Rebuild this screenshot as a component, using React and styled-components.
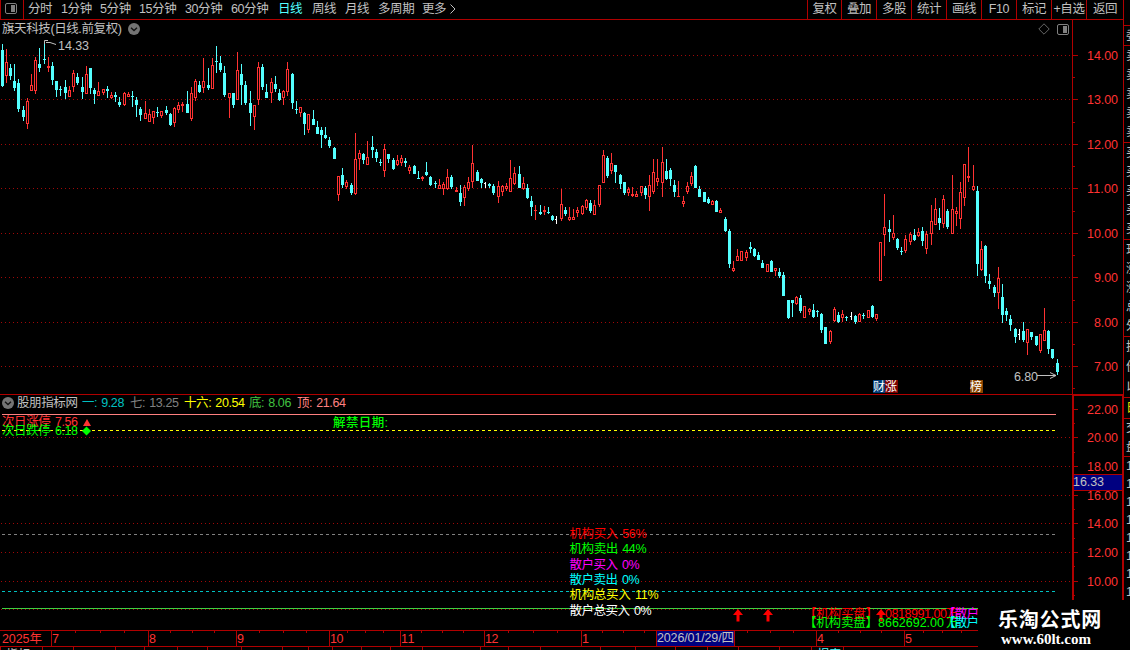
import React from "react";
import styled, { createGlobalStyle, ThemeProvider } from "styled-components";

const theme = {
  colors: {
    line: "#b00000",
    grid: "#a00808",
    red: "#ff3232",
    up: "#ff3232",
    down: "#54ffff",
    flat: "#ffffff",
    text: "#c0c0c0",
    muted: "#808080",
    navy: "#000080",
  },
  font: '"Liberation Sans", "Noto Sans CJK SC", sans-serif',
};
const c = theme.colors;

const GlobalStyle = createGlobalStyle`
  body {
    margin: 0;
    background: #000;
    overflow: hidden;
  }
`;

const Page = styled.div`
  position: relative;
  display: flex;
  width: 1130px;
  height: 650px;
  overflow: hidden;
  background: #000;
  color: ${p => p.theme.colors.text};
  font: 12.5px/16px ${p => p.theme.font};
  letter-spacing: -0.4px;
  white-space: nowrap;
`;

const Main = styled.div`
  display: flex;
  flex-direction: column;
  width: 1123px;
  flex-shrink: 0;
`;

//top toolbar
const Toolbar = styled.div`
  display: flex;
  box-sizing: border-box;
  height: 20px;
  border-bottom: 1px solid ${p => p.theme.colors.line};
`;

const LayoutButton = styled.div`
  box-sizing: border-box;
  width: 24px;
  height: 19px;
  padding: 2px 0 0 3px;
  border: solid ${p => p.theme.colors.line};
  border-width: 0 1px;
`;

const Periods = styled.div`
  display: flex;
  flex: 1;
  padding-left: 4px;
`;

const Period = styled.span`
  width: ${p => p.$w}px;
  line-height: 18px;
  color: ${p => (p.$active ? p.theme.colors.down : p.theme.colors.text)};
`;

const Tool = styled.span`
  box-sizing: border-box;
  width: ${p => p.$w || 35}px;
  line-height: 18px;
  text-align: center;
  border-left: 1px solid ${p => p.theme.colors.line};
`;

//panels
const Panel = styled.div`
  display: flex;
  height: ${p => p.$h}px;
`;

const Plot = styled.div`
  display: flex;
  flex-direction: column;
  width: 1072px;
  flex-shrink: 0;
`;

const TitleRow = styled.div`
  display: flex;
  align-items: center;
  height: 18px;
  padding: 0 3px 0 2px;
`;

const Title = styled.span`
  width: 126px;
`;

const TitleTools = styled.div`
  display: flex;
  align-items: center;
  gap: 6px;
  margin-left: auto;
`;

const Legend = styled.div`
  display: flex;
  align-items: center;
  box-sizing: border-box;
  height: 18px;
  padding: 0 0 2px 2px;
  border-top: 1px solid ${p => p.theme.colors.line};
  word-spacing: 1px;
`;

const LegendName = styled.span`
  width: 65px;
  padding-left: 3px;
`;

const LegendItem = styled.span`
  width: ${p => p.$w}px;
  color: ${p => p.$color};
`;

const Drawing = styled.svg`
  display: block;
  flex-shrink: 0;
  overflow: hidden;
  letter-spacing: 0;
  word-spacing: 1.5px;
`;

//bottom tabs
const Tabs = styled.div`
  display: flex;
  box-sizing: border-box;
  width: 978px;
  height: 4px;
  border-top: 1px solid ${p => p.theme.colors.line};
  overflow: hidden;
`;

const Tab = styled.span`
  box-sizing: border-box;
  width: ${p => p.$w}px;
  flex-shrink: 0;
  padding-left: 5px;
  border-left: 1px solid ${p => p.theme.colors.line};
  color: ${p => p.$color || p.theme.colors.text};
`;

//quote strip at the right edge
const Strip = styled.div`
  display: flex;
  flex-direction: column;
  box-sizing: border-box;
  width: 7px;
  border-left: 1px solid ${p => p.theme.colors.line};
  padding-top: 25px;
  overflow: hidden;
`;

const StripGroup = styled.div`
  display: flex;
  flex-direction: column;
  justify-content: space-around;
  box-sizing: border-box;
  height: ${p => p.$h}px;
  padding-left: 2px;
  border-top: 1px solid ${p => p.theme.colors.line};
  color: ${p => p.$color || p.theme.colors.text};
  line-height: 18px;
  overflow: hidden;
`;

const Watermark = styled.div`
  position: absolute;
  left: 978px;
  top: 600px;
  box-sizing: border-box;
  width: 152px;
  height: 50px;
  padding: 6px 0 0 20px;
  background: #000;
  color: #fff;
`;

const WatermarkName = styled.div`
  font: bold 20px/26px "Noto Sans CJK SC", sans-serif;
  letter-spacing: 0.8px;
`;

const WatermarkUrl = styled.div`
  margin: -1px 0 0 3px;
  font: bold 15px/16px "Liberation Serif", serif;
  letter-spacing: 0;
`;

const PanelIcon = () => (
  <svg width="13" height="12" viewBox="0 0 13 12" fill="none">
    <rect x="1.5" y="1.5" width="11" height="10" rx="1.5" stroke={c.muted} />
    <rect x="7" y="3" width="4" height="7" fill={c.muted} />
  </svg>
);

const ChevronIcon = () => (
  <svg width="12" height="12" viewBox="0 0 12 12" fill="none">
    <circle cx="6" cy="6" r="6" fill="#747474" />
    <path d="M3 4.8 6 7.6 9 4.8" stroke="#111" strokeWidth="1.3" />
  </svg>
);

const DiamondIcon = () => (
  <svg width="12" height="12" viewBox="0 0 12 12" fill="none">
    <path d="M6 .8 11.2 6 6 11.2.8 6Z" stroke={c.muted} strokeWidth=".8" />
  </svg>
);

// cy is the middle of the glyphs, w the full run length
const Label = ({ x, cy, w, color = c.red, size = 12.5, weight, children }) => (
  <text
    x={x}
    y={cy + 5}
    textLength={w}
    fontSize={size}
    fontWeight={weight}
    fill={color}
  >
    {children}
  </text>
);

const GridLine = ({ y }) => (
  <path
    d={`M1 ${y + 0.5}H1072`}
    stroke={c.grid}
    strokeDasharray="1 3"
    shapeRendering="crispEdges"
  />
);

// [kind, high, top, bottom, low] - u: up, d: down, w: unchanged
const candles = `
d44,50,86,87 u49,62,76,83 d64,68,76,80 d64,81,88,91 d79,83,109,112 d106,110,117,121 u98,101,124,129
u74,85,91,91 u57,60,91,94 d48,64,68,72 d43,59,60,64 u57,66,68,72 d62,66,80,85 d81,81,90,97
d86,89,90,96 d80,87,93,99 u86,90,97,97 u70,73,87,92 d73,77,83,85 d77,87,92,99 u66,74,94,94
d68,68,88,94 d88,90,94,104 u82,91,96,96 u89,89,93,95 d86,89,91,98 u92,95,98,99 d92,95,97,102
d97,102,105,107 u92,93,105,106 u92,94,97,97 d91,96,97,107 d97,100,105,117 d107,109,115,121
u101,113,119,119 u109,114,122,122 u111,111,118,124 d107,112,113,117 u111,111,116,118
d106,110,113,115 d113,114,125,126 u107,108,123,127 u102,105,110,113 u102,104,106,112
d91,104,113,113 u87,93,119,121 u79,81,98,101 d81,85,92,93 u58,81,88,93 d68,85,88,90 u58,65,89,89
d46,61,62,73 d56,63,70,72 d66,73,95,97 u93,93,98,118 d93,93,105,108 u52,70,100,100 d64,74,85,105
d81,85,103,105 d91,103,113,126 u105,105,117,130 u62,67,100,105 d64,67,87,90 d84,92,98,98
u78,82,93,103 d76,84,89,92 d89,93,100,101 u90,91,98,105 u62,69,92,96 d73,74,103,109
d101,109,110,114 u107,107,113,117 d112,113,124,135 u114,114,130,133 d110,119,125,125
d121,127,134,134 d127,130,135,148 d127,135,138,139 d137,140,146,148 d147,148,159,159
u176,176,195,201 d168,175,185,188 u180,182,187,189 d183,185,193,195 u133,159,194,195
u150,153,159,170 d153,154,160,164 u141,157,165,165 d136,147,150,158 d149,152,158,162
d159,162,163,166 u144,149,171,177 d154,154,159,163 d158,160,169,170 u155,160,165,166
u155,158,163,166 d158,161,163,167 u165,167,171,174 d165,166,174,174 d171,178,179,179
u176,177,179,181 d162,172,175,176 d176,177,185,186 d181,183,184,188 u179,185,189,189
u182,184,189,195 u169,177,189,190 d175,177,187,189 u187,190,192,192 d185,193,202,206
u185,187,198,206 u177,182,189,191 u145,163,182,188 d170,172,181,181 d178,179,183,188
w182,183,184,188 d183,184,186,188 d184,186,193,195 u181,186,197,203 u185,186,192,196
u183,186,189,191 u160,178,192,192 u167,173,184,185 d166,174,188,188 u177,183,189,190
d184,188,198,199 d196,201,207,216 u205,210,211,220 d205,212,214,215 u206,210,212,215
d207,212,213,214 d215,216,220,221 w216,219,220,224 u189,204,219,221 d207,210,214,216
u207,217,220,221 u209,217,220,220 u207,210,213,217 u205,206,214,215 u199,200,208,210
d200,203,211,213 u200,205,215,215 u185,185,205,207 u150,155,183,183 d156,158,176,178
u153,163,171,174 d165,165,172,183 d174,175,184,189 d182,182,193,195 u187,189,193,196
u187,194,196,197 u191,194,197,197 u186,186,193,196 d186,188,195,199 u175,185,197,211
u159,172,192,194 u159,178,182,186 u147,162,183,197 d159,171,179,180 d168,170,179,186
d180,185,192,197 u181,196,197,197 u196,201,204,207 u182,186,192,194 u172,176,184,186
d165,166,188,188 d186,189,197,197 d192,192,202,202 d197,199,203,204 u200,201,205,205
d200,201,212,212 u208,210,213,213 d217,219,231,232 d229,231,264,268 u261,268,271,272
u249,256,261,261 u251,251,261,261 u250,252,258,261 d242,247,249,253 d248,249,256,257
d252,255,260,260 d260,263,268,268 u264,264,272,272 d260,261,272,272 u268,268,271,276
d268,272,276,278 d272,275,296,296 d300,300,318,319 d300,300,303,317 u296,297,304,305
d295,298,311,313 u306,306,318,318 u308,309,312,315 d304,310,317,318 d310,311,312,317
d313,314,330,333 d327,327,344,344 u330,331,342,344 u307,309,321,322 d312,315,322,323
u310,314,318,322 d316,317,318,321 w312,316,317,320 d315,316,322,324 u313,314,322,322
d313,315,316,319 u310,310,318,318 d305,306,317,318 u314,314,319,321 u242,242,281,281
u194,227,235,256 d220,229,232,242 u215,233,238,240 d238,239,248,250 d247,251,252,255
u235,239,251,253 u232,234,242,245 d229,235,240,241 u228,232,236,237 d227,231,241,246
u231,234,249,254 u205,221,234,245 u198,209,225,225 d208,218,223,230 u195,199,224,228
d209,211,227,229 u175,209,234,234 u207,211,214,226 u182,192,219,229 u164,164,198,206
u147,176,178,182 u165,186,190,191 d186,191,264,276 u241,249,270,271 d245,246,276,283
d274,281,284,289 d285,287,293,297 u267,278,293,309 d284,297,315,323 d308,311,315,321
d315,319,325,331 d328,329,337,343 w329,334,335,340 d322,331,340,342 u329,329,343,355
d332,332,337,340 d336,336,345,346 u334,334,351,353 u308,330,341,341 d330,331,349,354
d349,349,358,359 d359,363,372,375`
  .trim()
  .split(/\s+/)
  .map((s, i) => [
    s[0],
    Math.floor(2.15 + i * 4.2032),
    ...s.slice(1).split(",").map(Number),
  ]);

const Candle = ({ kind, x, high, top, bottom, low }) => {
  const color = { u: c.up, d: c.down, w: c.flat }[kind];
  const h = Math.max(1, bottom - top);
  const hollow = kind === "u" && h > 2;
  return (
    <g fill={color}>
      <rect x={x} y={high} width="1" height={Math.max(1, low - high)} />
      <rect x={x - 1} y={top} width={kind === "w" ? 2 : 3} height={h} />
      {hollow && <rect x={x} y={top + 1} width="1" height={h - 2} fill="#000" />}
    </g>
  );
};

const Badge = ({ x, w = 13, bg, children }) => (
  <g>
    <rect x={x} y="380" width={w} height="13" fill={bg} />
    <Label x={x} cy={386} w={12} size={12} color="#fff">
      {children}
    </Label>
  </g>
);

const priceTicks = [55, 99, 144, 188, 233, 277, 322, 366];
const priceMinor = [77, 122, 166, 211, 255, 300, 344, 388];

const PriceChart = () => (
  <Drawing width="1072" height="356" viewBox="0 38 1072 356">
    {priceTicks.map(y => (
      <GridLine key={y} y={y} />
    ))}
    <g shapeRendering="crispEdges">
      {candles.map(([kind, x, high, top, bottom, low]) => (
        <Candle key={x} {...{ kind, x, high, top, bottom, low }} />
      ))}
    </g>
    <path d="M44.5 44V40.5H48M46 42.5 50 42.5 56 44.5" stroke={c.text} fill="none" />
    <Label x={58} cy={45} w={31} color={c.text}>14.33</Label>
    <Label x={1014} cy={376} w={24} color={c.text}>6.80</Label>
    <path d="M1037 375.5H1056M1050 372.5 1056 375.5 1050 378.5" stroke={c.text} fill="none" />
    <Badge x={873} w={12} bg="#003c78">财</Badge>
    <Badge x={885} bg="#7c0000">涨</Badge>
    <Badge x={970} bg="#8a4400">榜</Badge>
  </Drawing>
);

const PriceAxis = () => (
  <Drawing width="51" height="374" viewBox="1072 20 51 374">
    <g fill={c.line} shapeRendering="crispEdges">
      <rect x="1072" y="20" width="1" height="374" />
      {priceTicks.map(y => (
        <rect key={y} x="1073" y={y} width="5" height="1" />
      ))}
      {priceMinor.map(y => (
        <rect key={y} x="1073" y={y} width="2" height="1" />
      ))}
    </g>
    {priceTicks.map((y, i) => (
      <Label key={y} x={i < 5 ? 1087 : 1094} cy={y} w={i < 5 ? 31 : 24}>
        {(14 - i).toFixed(2)}
      </Label>
    ))}
  </Drawing>
);

const volTicks = [409, 437, 466, 495, 523, 552, 581];

const Dashed = ({ y, color }) => (
  <path
    d={`M2 ${y + 0.5}H1056`}
    stroke={color}
    strokeDasharray="3 3"
    shapeRendering="crispEdges"
  />
);

const UpArrow = ({ x, y = 609 }) => (
  <path
    d={`M${x} ${y} l5 6 h-3.5 v6.5 h-3 v-6.5 h-3.5 Z`}
    fill="#ff0000"
  />
);

const ratios = [
  ["机构买入 56%", 77, 533, "#ff0000"],
  ["机构卖出 44%", 77, 548, "#00ff00"],
  ["散户买入 0%", 70, 564, "#ff00ff"],
  ["散户卖出 0%", 70, 579, "#00ffff"],
  ["机构总买入 11%", 89, 594, "#ffff00"],
  ["散户总买入 0%", 82, 610, "#ffffff"],
];

const IndicatorChart = () => (
  <Drawing width="1072" height="218" viewBox="0 412 1072 218">
    {[...volTicks.slice(1), 609].map(y => (
      <GridLine key={y} y={y} />
    ))}
    <rect x="2" y="414" width="1054" height="1" fill="#ff8080" />
    <Dashed y={430} color="#ffff00" />
    <Dashed y={534} color="#808080" />
    <Dashed y={591} color="#00c0c0" />
    <rect x="2" y="608" width="1054" height="1" fill="#40d040" />
    <Label x={2} cy={421} w={76}>次日涨停 7.56</Label>
    <Label x={2} cy={430} w={76} color="#00ff00">次日跌停 6.18</Label>
    <path d="M87 419 91 426H83Z" fill={c.red} />
    <path d="M86.5 426.5 91 431 86.5 435.5 82 431Z" fill="#00ff00" />
    <Label x={333} cy={422} w={55} weight={500} color="#00ff00">解禁日期:</Label>
    {ratios.map(([text, w, cy, color]) => (
      <Label key={text} x={569.5} cy={cy} w={w} color={color}>
        {text}
      </Label>
    ))}
    <UpArrow x={738} />
    <UpArrow x={768} />
    <Label x={804} cy={613} w={74} color="#ff0000">【机构买盘】</Label>
    <UpArrow x={881} />
    <Label x={885} cy={613} w={62} color="#ff0000">0818991.00</Label>
    <Label x={946} cy={613} w={12} color="#ff0000">万</Label>
    <Label x={943} cy={613} w={36} color="#ff00ff">【散户</Label>
    <Label x={804} cy={622} w={74} color="#00ff00">【机构卖盘】</Label>
    <Label x={878} cy={622} w={66} color="#00ff00">8662692.00</Label>
    <Label x={946} cy={622} w={12} color="#00ff00">万</Label>
    <Label x={943} cy={622} w={36} color="#00ffff">【散户</Label>
  </Drawing>
);

const IndicatorAxis = () => (
  <Drawing width="51" height="236" viewBox="1072 394 51 236">
    <g fill={c.line} shapeRendering="crispEdges">
      <rect x="1072" y="394" width="2" height="206" />
      <rect x="1072" y="394" width="51" height="2" />
      <rect x="1122" y="394" width="1" height="206" />
      {volTicks.map(y => (
        <rect key={y} x="1074" y={y} width="4" height="1" />
      ))}
      {[423, 452, 509, 538, 566, 595].map(y => (
        <rect key={y} x="1074" y={y} width="1" height="1" />
      ))}
    </g>
    {volTicks.map((y, i) => (
      <Label key={y} x={1087} cy={y} w={31}>
        {(22 - i * 2).toFixed(2)}
      </Label>
    ))}
    <rect x="1074" y="474" width="48" height="17" fill={c.line} />
    <rect x="1074" y="475" width="48" height="15" fill={c.navy} />
    <Label x={1073} cy={481} w={31} color={c.text}>16.33</Label>
  </Drawing>
);

const months = [
  [51, "7"],
  [148, "8"],
  [236, "9"],
  [329, "10"],
  [400, "11"],
  [484, "12"],
  [581, "1"],
  [816, "4"],
  [904, "5"],
];
const weekTicks = [
  75, 100, 124, 170, 192, 214, 259, 283, 306, 347, 365, 383, 421, 442, 463, 508,
  533, 557, 602, 623, 644, 747, 770, 793, 838, 860, 881, 923, 942, 961,
];

const DateAxis = () => (
  <Drawing width="978" height="16" viewBox="0 630 978 16">
    <g fill={c.line} shapeRendering="crispEdges">
      <rect x="0" y="630" width="978" height="1" />
      {weekTicks.map(x => (
        <rect key={x} x={x} y="631" width="1" height="2" />
      ))}
      {months.map(([x]) => (
        <rect key={x} x={x} y="631" width="1" height="15" />
      ))}
      <rect x="656" y="631" width="79" height="15" />
      <rect x="657" y="631" width="77" height="15" fill={c.navy} />
    </g>
    <Label x={2} cy={638} w={40}>2025年</Label>
    {months.map(([x, m]) => (
      <Label key={m} x={x + 1} cy={638} w={m.length * 6.7}>
        {m}
      </Label>
    ))}
    <Label x={657} cy={637} w={77} color={c.text}>2026/01/29/四</Label>
  </Drawing>
);

const periods = [
  ["分时", 33],
  ["1分钟", 39],
  ["5分钟", 39],
  ["15分钟", 46],
  ["30分钟", 46],
  ["60分钟", 47],
  ["日线", 34],
  ["周线", 33],
  ["月线", 33],
  ["多周期", 44],
  ["更多", 27],
];
const tools = ["复权", "叠加", "多股", "统计", "画线", "F10", "标记", "+自选", "返回"];

const legend = [
  ["一: 9.28", 48, "#00c0c0"],
  ["七: 13.25", 54, "#808080"],
  ["十六: 20.54", 65, "#ffff00"],
  ["底: 8.06", 48, "#40c040"],
  ["顶: 21.64", 60, "#ff8080"],
];

const strip = [
  [20, ["委"]],
  [97, ["卖", "卖", "卖", "卖", "卖"]],
  [97, ["买", "买", "买", "买", "买"]],
  [97, ["现", "涨", "涨", "总", "外"]],
  [61, ["换", "份", "以"]],
  [21, ["日"], "#e0e000"],
  [38, ["交", "盘"]],
  [145, ["1", "1", "1", "1", "1", "1", "1", "1"]],
];

const tabs = [
  42, 31, 42, 29, 33, 30, 34, 41, 26, 24, 29, 29, 32, 58, 28, 32, 60, 35, 40,
  32, 31, 41, 32, 32, 107,
];

const App = () => (
  <ThemeProvider theme={theme}>
    <GlobalStyle />
    <Page>
      <Main>
        <Toolbar>
          <LayoutButton>
            <PanelIcon />
          </LayoutButton>
          <Periods>
            {periods.map(([name, w]) => (
              <Period key={name} $w={w} $active={name === "日线"}>
                {name}
              </Period>
            ))}
            <svg width="8" height="18" viewBox="0 0 8 18" fill="none">
              <path d="M1.5 4.5 6 9 1.5 13.5" stroke={c.text} />
            </svg>
          </Periods>
          {tools.map((name, i) => (
            <Tool key={name} $w={i === 0 ? 34 : i === 8 ? 37 : 35}>
              {name}
            </Tool>
          ))}
        </Toolbar>
        <Panel $h={374}>
          <Plot>
            <TitleRow>
              <Title>旗天科技(日线.前复权)</Title>
              <ChevronIcon />
              <TitleTools>
                <DiamondIcon />
                <PanelIcon />
              </TitleTools>
            </TitleRow>
            <PriceChart />
          </Plot>
          <PriceAxis />
        </Panel>
        <Panel $h={236}>
          <Plot>
            <Legend>
              <ChevronIcon />
              <LegendName>股朋指标网</LegendName>
              {legend.map(([text, w, color]) => (
                <LegendItem key={text} $w={w} $color={color}>
                  {text}
                </LegendItem>
              ))}
            </Legend>
            <IndicatorChart />
          </Plot>
          <IndicatorAxis />
        </Panel>
        <DateAxis />
        <Tabs>
          {tabs.map((w, i) => (
            <Tab key={i} $w={w} $color={i === 23 ? c.down : undefined}>
              {i === 0 && "指标"}
              {i === 23 && "报表"}
            </Tab>
          ))}
        </Tabs>
      </Main>
      <Strip>
        {strip.map(([h, rows, color], i) => (
          <StripGroup key={i} $h={h} $color={color}>
            {rows.map((row, j) => (
              <span key={j}>{row}</span>
            ))}
          </StripGroup>
        ))}
      </Strip>
      <Watermark>
        <WatermarkName>乐淘公式网</WatermarkName>
        <WatermarkUrl>www.60lt.com</WatermarkUrl>
      </Watermark>
    </Page>
  </ThemeProvider>
);

export default App;
